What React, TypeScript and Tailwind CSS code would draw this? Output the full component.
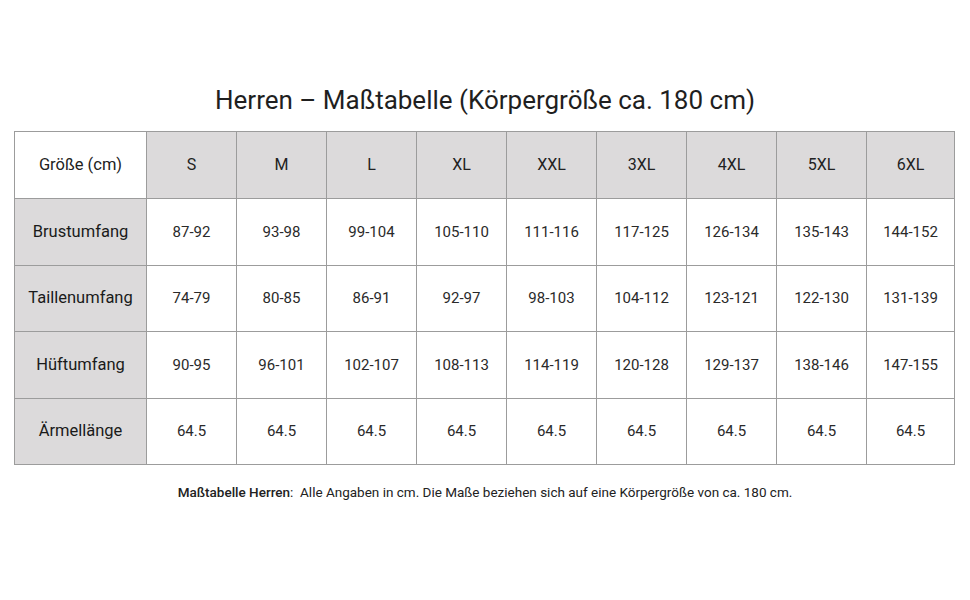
const sizes = ["S", "M", "L", "XL", "XXL", "3XL", "4XL", "5XL", "6XL"];

const rows = [
  {
    label: "Brustumfang",
    values: ["87-92", "93-98", "99-104", "105-110", "111-116", "117-125", "126-134", "135-143", "144-152"],
  },
  {
    label: "Taillenumfang",
    values: ["74-79", "80-85", "86-91", "92-97", "98-103", "104-112", "123-121", "122-130", "131-139"],
  },
  {
    label: "Hüftumfang",
    values: ["90-95", "96-101", "102-107", "108-113", "114-119", "120-128", "129-137", "138-146", "147-155"],
  },
  {
    label: "Ärmellänge",
    values: ["64.5", "64.5", "64.5", "64.5", "64.5", "64.5", "64.5", "64.5", "64.5"],
  },
];

const App = () => {
  return (
    <div
      className="w-[970px] h-[600px] bg-white flex flex-col items-center pt-[84px] text-[#222]"
      style={{ fontFamily: "Roboto, 'Liberation Sans', sans-serif" }}
    >
      <h1 className="text-[26px] leading-[32px] text-[#1f1f1f]">
        Herren – Maßtabelle (Körpergröße ca. 180 cm)
      </h1>

      {/* size table */}
      <div className="self-start ml-[14px] mt-[15px] grid grid-cols-[131px_repeat(8,89px)_87px] grid-rows-[66px_66px_65px_66px_65px] gap-px p-px bg-[#9c9c9c]">
        <div className="bg-white flex items-center justify-center text-[16.5px]">
          Größe (cm)
        </div>
        {sizes.map((s) => (
          <div
            key={s}
            className="bg-[#dcdadb] flex items-center justify-center text-[16px]"
          >
            {s}
          </div>
        ))}

        {rows.map((row) => (
          <div key={row.label} className="contents">
            <div className="bg-[#dcdadb] flex items-center justify-center text-[16.5px] text-[#1a1a1a]">
              {row.label}
            </div>
            {row.values.map((v, i) => (
              <div
                key={i}
                className="bg-white flex items-center justify-center text-[15px] text-[#2a2a2a]"
              >
                {v}
              </div>
            ))}
          </div>
        ))}
      </div>

      <p className="mt-[18px] text-[13.5px] leading-[18px] text-[#222]">
        <span className="font-medium">Maßtabelle Herren</span>:&nbsp; Alle Angaben in cm. Die
        Maße beziehen sich auf eine Körpergröße von ca. 180 cm.
      </p>
    </div>
  );
};

export default App;
